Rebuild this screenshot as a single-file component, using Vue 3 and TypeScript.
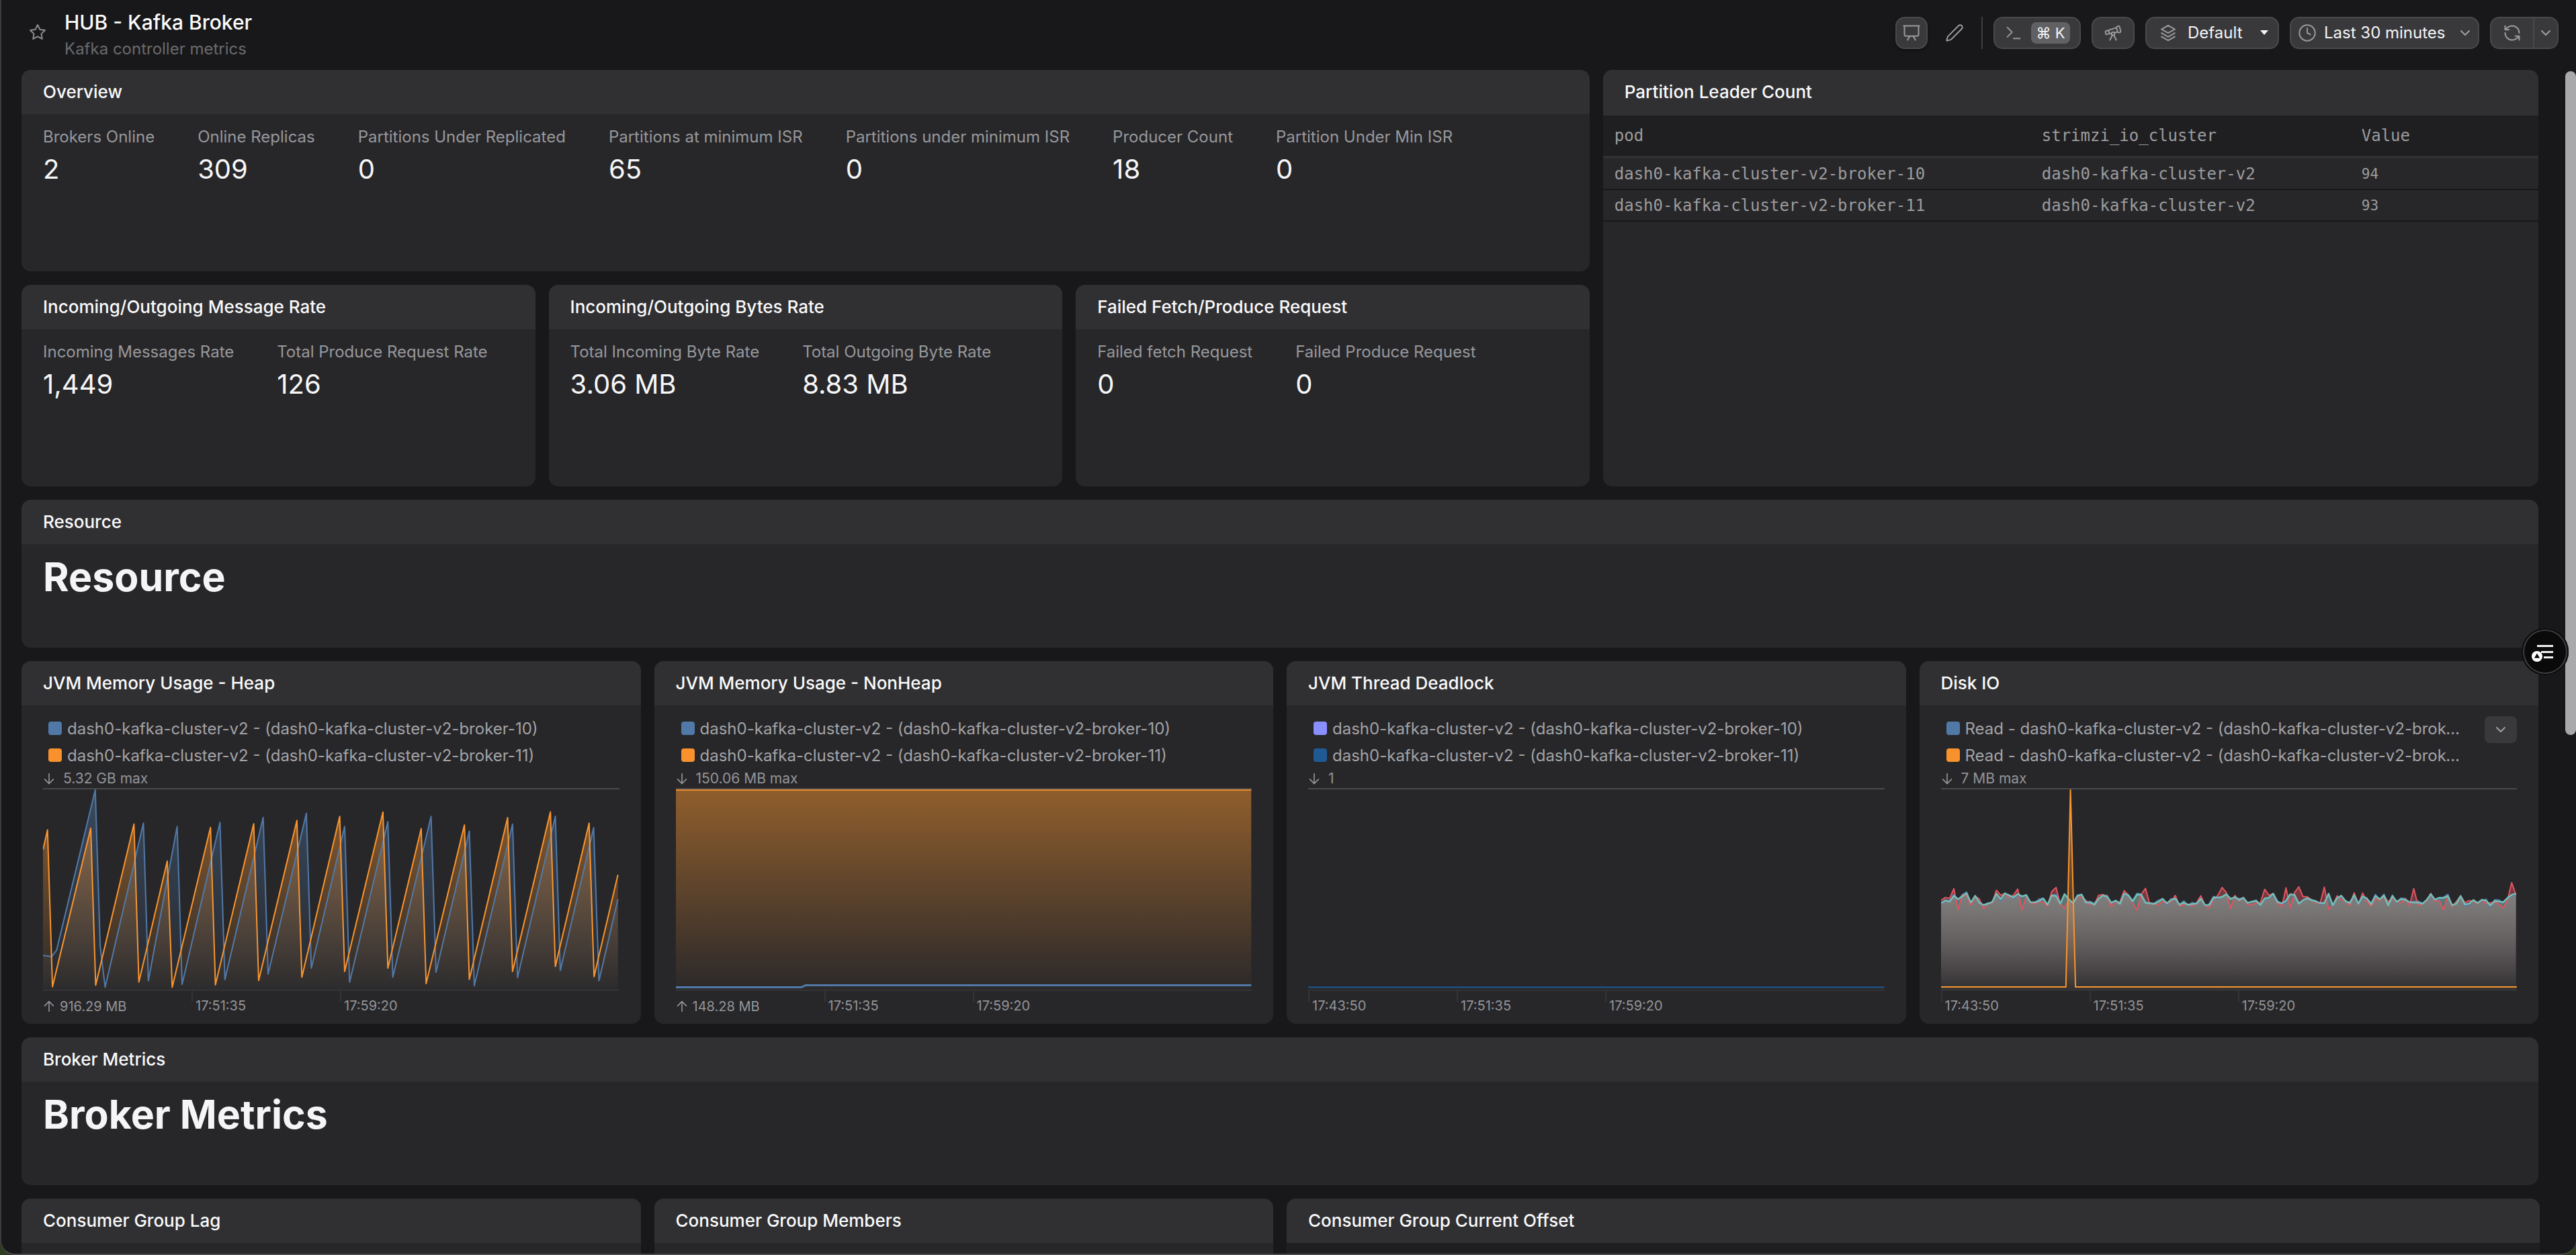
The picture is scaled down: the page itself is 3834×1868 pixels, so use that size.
<script setup lang="ts">
type Pt = [number, number]
interface Series { color: string; points: Pt[]; top: number; width?: number }
interface Panel {
  id: string
  title: string
  legend: { color: string; text: string }[]
  max: string
  min?: string
  times: string[]
  vb: [number, number, number, number]
  series: Series[]
  expand?: boolean
}

const BLUE = '#5179a8'
const ORANGE = '#f9952f'
const RED = '#e0555f'
const TEAL = '#73bfb8'

const legendFor = (a: string, b: string) => [
  { color: a, text: 'dash0-kafka-cluster-v2 - (dash0-kafka-cluster-v2-broker-10)' },
  { color: b, text: 'dash0-kafka-cluster-v2 - (dash0-kafka-cluster-v2-broker-11)' }
]

const heapOrange: Pt[] = [[105,795],[116,712],[128,1368],[221,705],[233,1362],[326,688],[338,1348],[407,843],[419,1370],[512,702],[524,1360],[617,687],[629,1342],[722,673],[734,1328],[826,656],[838,1304],[931,638],[943,1290],[1024,707],[1036,1355],[1129,692],[1141,1337],[1234,661],[1246,1304],[1338,637],[1350,1283],[1432,684],[1444,1326],[1502,900]]
const heapBlue: Pt[] = [[105,1237],[126,1242],[138,1215],[232,545],[244,1200],[256,1370],[349,684],[361,1343],[431,698],[443,1358],[535,681],[547,1338],[640,660],[652,1315],[745,643],[757,1290],[838,698],[850,1349],[943,678],[955,1328],[1048,656],[1060,1307],[1141,717],[1153,1364],[1246,688],[1258,1330],[1350,655],[1362,1300],[1443,703],[1456,1343],[1502,1002]]

let seed = 4711
function rnd(): number {
  seed = (seed * 1103515245 + 12345) % 2147483648
  return seed / 2147483648
}
const redUp = [78, 228, 320, 538, 722, 825, 870, 905, 962, 1180, 1410]
const redDown = [90, 240, 345, 515, 735, 885, 975, 1250, 1388]
const tealPts: Pt[] = []
const redPts: Pt[] = []
const bluePts: Pt[] = []
for (let x = 45; x <= 1423; x += 10.2) {
  const t = 1058 + (rnd() - 0.5) * 46
  tealPts.push([x, t])
  let r = t + (rnd() - 0.5) * 30
  if (redUp.some((v) => Math.abs(v - x) < 5.2)) r = x > 1400 ? 995 : 1010 + rnd() * 12
  if (redDown.some((v) => Math.abs(v - x) < 5.2)) r = 1090 + rnd() * 12
  redPts.push([x, r])
  bluePts.push([x, t + (rnd() - 0.5) * 14])
}

const panels: Panel[] = [
  {
    id: 'heap', title: 'JVM Memory Usage - Heap', legend: legendFor(BLUE, '#f9922c'),
    max: '5.32 GB max', min: '916.29 MB', times: ['17:51:35', '17:59:20'], vb: [105, 543, 1400, 837],
    series: [{ color: BLUE, points: heapBlue, top: 0.42 }, { color: ORANGE, points: heapOrange, top: 0.5 }]
  },
  {
    id: 'nonheap', title: 'JVM Memory Usage - NonHeap', legend: legendFor(BLUE, '#f9922c'),
    max: '150.06 MB max', min: '148.28 MB', times: ['17:51:35', '17:59:20'], vb: [75, 543, 1400, 837],
    series: [
      { color: ORANGE, points: [[75, 545], [1473, 545]], top: 0.5 },
      { color: BLUE, points: [[75, 1370], [380, 1370], [390, 1362], [1473, 1362]], top: 0, width: 3 }
    ]
  },
  {
    id: 'thread', title: 'JVM Thread Deadlock', legend: legendFor('#8a8fff', '#1f5a94'),
    max: '1', times: ['17:43:50', '17:51:35', '17:59:20'], vb: [78, 543, 1400, 837],
    series: [{ color: '#1f5a94', points: [[78, 1370], [1478, 1370]], top: 0 }]
  },
  {
    id: 'disk', title: 'Disk IO',
    legend: [
      { color: BLUE, text: 'Read - dash0-kafka-cluster-v2 - (dash0-kafka-cluster-v2-broker-10)' },
      { color: '#f9922c', text: 'Read - dash0-kafka-cluster-v2 - (dash0-kafka-cluster-v2-broker-11)' }
    ],
    max: '7 MB max', times: ['17:43:50', '17:51:35', '17:59:20'], vb: [45, 642, 1380, 758], expand: true,
    series: [
      { color: BLUE, points: bluePts, top: 0.5 },
      { color: '#cfc16a', points: tealPts, top: 0.3, width: 0 },
      { color: RED, points: redPts, top: 0.85 },
      { color: TEAL, points: tealPts, top: 0.85, width: 2.5 },
      { color: ORANGE, points: [[45, 1390], [344, 1390], [355, 642], [367, 1390], [1425, 1390]], top: 0.5 }
    ]
  }
]

function linePath(pts: Pt[]): string {
  return 'M' + pts.map((p) => `${p[0]} ${p[1]}`).join(' L')
}
function areaPath(pts: Pt[], base: number): string {
  return `${linePath(pts)} L${pts[pts.length - 1][0]} ${base} L${pts[0][0]} ${base} Z`
}
const vbStr = (p: Panel) => p.vb.join(' ')
const bottom = (p: Panel) => p.vb[1] + p.vb[3]

const overview = [
  ['Brokers Online', '2'], ['Online Replicas', '309'], ['Partitions Under Replicated', '0'],
  ['Partitions at minimum ISR', '65'], ['Partitions under minimum ISR', '0'],
  ['Producer Count', '18'], ['Partition Under Min ISR', '0']
]
const statCards = [
  { title: 'Incoming/Outgoing Message Rate', stats: [['Incoming Messages Rate', '1,449'], ['Total Produce Request Rate', '126']] },
  { title: 'Incoming/Outgoing Bytes Rate', stats: [['Total Incoming Byte Rate', '3.06 MB'], ['Total Outgoing Byte Rate', '8.83 MB']] },
  { title: 'Failed Fetch/Produce Request', stats: [['Failed fetch Request', '0'], ['Failed Produce Request', '0']] }
]
const rows = [
  ['dash0-kafka-cluster-v2-broker-10', 'dash0-kafka-cluster-v2', '94'],
  ['dash0-kafka-cluster-v2-broker-11', 'dash0-kafka-cluster-v2', '93']
]
</script>

<template>
  <div class="window">
    <header class="topbar">
      <svg class="star" viewBox="0 0 24 24" fill="none" stroke="#8e8e90" stroke-width="1.7" stroke-linejoin="round">
        <path d="M12 2.6l2.9 5.9 6.5.95-4.7 4.58 1.1 6.47L12 17.45 6.2 20.5l1.1-6.47-4.7-4.58 6.5-.95z" />
      </svg>
      <div class="titles">
        <div class="page-title">HUB - Kafka Broker</div>
        <div class="page-sub">Kafka controller metrics</div>
      </div>
      <div class="toolbar">
        <button class="btn w48 shadow">
          <svg class="ic" viewBox="0 0 24 24"><path d="M2 3h20M21 3v11a2 2 0 0 1-2 2H5a2 2 0 0 1-2-2V3M10 16l-3 5M14 16l3 5" /></svg>
        </button>
        <button class="btn w48 bare">
          <svg class="ic" viewBox="0 0 24 24"><path d="M21.174 6.812a1 1 0 0 0-3.986-3.987L3.842 16.174a2 2 0 0 0-.5.83l-1.321 4.352a.5.5 0 0 0 .623.622l4.353-1.32a2 2 0 0 0 .83-.497z" /></svg>
        </button>
        <span class="divider"></span>
        <button class="btn cmd">
          <svg class="ic" viewBox="0 0 24 24"><path d="M4 17l6-6-6-6M12 19h8" /></svg>
          <kbd class="kbd"><span>⌘</span><span>K</span></kbd>
        </button>
        <button class="btn w64">
          <svg class="ic" viewBox="0 0 24 24">
            <path d="M10.065 12.493l-6.18 1.318a.934.934 0 0 1-1.108-.702l-.537-2.15a1.07 1.07 0 0 1 .691-1.265l13.504-4.44M13.56 11.747l4.332-.924M16 21l-3.105-6.21M16.485 5.94a2 2 0 0 1 1.455-2.425l1.09-.272a1 1 0 0 1 1.212.727l1.515 6.06a1 1 0 0 1-.727 1.213l-1.09.272a2 2 0 0 1-2.425-1.455zM6.158 8.633l1.114 4.456M8 21l3.105-6.21" />
            <circle cx="12" cy="13" r="2" />
          </svg>
        </button>
        <button class="btn variant">
          <svg class="ic" viewBox="0 0 24 24"><path d="M12 2.5l8.5 4.8-8.5 4.8-8.5-4.8zM3.5 12.2l8.5 4.8 8.5-4.8M3.5 16.8l8.5 4.8 8.5-4.8" /></svg>
          <span class="btn-text">Default</span>
          <span class="caret"></span>
        </button>
        <button class="btn range">
          <svg class="ic" viewBox="0 0 24 24"><circle cx="12" cy="12" r="10" /><path d="M12 6v6l4 2" /></svg>
          <span class="btn-text">Last 30 minutes</span>
          <svg class="chev" viewBox="0 0 24 24"><path d="M6 9l6 6 6-6" /></svg>
        </button>
        <div class="btn refresh">
          <span class="ref-main">
            <svg class="ic" viewBox="0 0 24 24"><path d="M21 12a9 9 0 0 0-9-9 9.75 9.75 0 0 0-6.74 2.74L3 8M3 3v5h5M3 12a9 9 0 0 0 9 9 9.75 9.75 0 0 0 6.74-2.74L21 16M16 16h5v5" /></svg>
          </span>
          <span class="ref-more">
            <svg class="chev" viewBox="0 0 24 24"><path d="M6 9l6 6 6-6" /></svg>
          </span>
        </div>
      </div>
    </header>

    <main class="grid">
      <section class="card s15">
        <div class="card-head">Overview</div>
        <div class="stats">
          <div v-for="s in overview" :key="s[0]" class="stat">
            <div class="stat-label">{{ s[0] }}</div>
            <div class="stat-value">{{ s[1] }}</div>
          </div>
        </div>
      </section>

      <section class="card s9 tall">
        <div class="card-head head-tall">Partition Leader Count</div>
        <div class="tbl-head tbl-row">
          <span>pod</span><span>strimzi_io_cluster</span><span>Value</span>
        </div>
        <div v-for="r in rows" :key="r[0]" class="tbl-line tbl-row">
          <span>{{ r[0] }}</span><span>{{ r[1] }}</span><span class="num">{{ r[2] }}</span>
        </div>
      </section>

      <section v-for="c in statCards" :key="c.title" class="card s5">
        <div class="card-head">{{ c.title }}</div>
        <div class="stats">
          <div v-for="s in c.stats" :key="s[0]" class="stat">
            <div class="stat-label">{{ s[0] }}</div>
            <div class="stat-value">{{ s[1] }}</div>
          </div>
        </div>
      </section>

      <section class="card s24">
        <div class="card-head">Resource</div>
        <h1 class="big">Resource</h1>
      </section>

      <section v-for="p in panels" :key="p.id" class="card s6">
        <div class="card-head">{{ p.title }}</div>
        <div class="chart-body">
          <div class="legend-row">
            <div class="legend">
              <div v-for="l in p.legend" :key="l.text" class="legend-item">
                <span class="swatch" :style="{ background: l.color }"></span>
                <span class="legend-text">{{ l.text }}</span>
              </div>
            </div>
            <button v-if="p.expand" class="expand">
              <svg class="chev" viewBox="0 0 24 24"><path d="M6 9l6 6 6-6" /></svg>
            </button>
          </div>
          <div class="axis-label max">
            <svg class="arrow" viewBox="0 0 24 24"><path d="M12 4v16M5 13l7 7 7-7" /></svg>
            <span>{{ p.max }}</span>
          </div>
          <svg class="plot" :viewBox="vbStr(p)" preserveAspectRatio="none">
            <defs>
              <linearGradient v-for="(s, i) in p.series" :id="`${p.id}-${i}`" :key="i" gradientUnits="userSpaceOnUse" x1="0" x2="0" :y1="p.vb[1]" :y2="bottom(p)">
                <stop offset="0" :stop-color="s.color" :stop-opacity="s.top" />
                <stop offset="1" :stop-color="s.color" stop-opacity="0.02" />
              </linearGradient>
            </defs>
            <template v-for="(s, i) in p.series" :key="i">
              <path v-if="s.top > 0" :d="areaPath(s.points, bottom(p))" :fill="`url(#${p.id}-${i})`" stroke="none" />
            </template>
            <path v-for="(s, i) in p.series" :key="'l' + i" :d="linePath(s.points)" fill="none" :stroke="s.color" :stroke-width="s.width ?? 2" vector-effect="non-scaling-stroke" stroke-linejoin="round" />
          </svg>
          <div class="axis">
            <div v-if="p.min" class="axis-col">
              <div class="axis-label min">
                <svg class="arrow" viewBox="0 0 24 24"><path d="M12 20V4M5 11l7-7 7 7" /></svg>
                <span>{{ p.min }}</span>
              </div>
            </div>
            <div v-for="t in p.times" :key="t" class="axis-col tick">{{ t }}</div>
          </div>
        </div>
      </section>

      <section class="card s24">
        <div class="card-head">Broker Metrics</div>
        <h1 class="big">Broker Metrics</h1>
      </section>

      <section class="card s6 cut"><div class="card-head">Consumer Group Lag</div></section>
      <section class="card s6 cut"><div class="card-head">Consumer Group Members</div></section>
      <section class="card s12 cut wide"><div class="card-head">Consumer Group Current Offset</div><div class="dark-body"></div></section>
    </main>

    <div class="scroll-thumb"></div>
    <div class="floater">
      <svg viewBox="0 0 70 70" class="floater-ic">
        <rect x="23" y="25" width="24" height="3" fill="#f2f2f2" />
        <rect x="29" y="34" width="18" height="3" fill="#f2f2f2" />
        <rect x="33" y="42" width="14" height="3" fill="#f2f2f2" />
        <circle cx="23" cy="42" r="8" fill="#fff" />
        <path d="M23 37.5l4.2 7h-8.4z" fill="#0a0a0a" />
      </svg>
    </div>
  </div>
</template>

<style>
html, body { margin: 0; background: #2f3d20; overflow: hidden; }
</style>

<style scoped>
.window {
  position: relative;
  box-sizing: border-box;
  width: 3834px;
  height: 1868px;
  overflow: hidden;
  background: #18181a;
  border-left: 2px solid #3c3c3e;
  border-bottom: 2px solid #4a4a4c;
  border-radius: 0 0 22px 22px;
  font-family: Inter, "Noto Sans", sans-serif;
  color: #fafafa;
}
.topbar { display: flex; align-items: center; height: 104px; padding: 0 26px 0 40px; box-sizing: border-box; }
.star { width: 28px; height: 28px; margin-right: 26px; margin-top: -8px; }
.titles { display: flex; flex-direction: column; gap: 4px; margin-top: -2px; }
.page-title { font-size: 30px; line-height: 40px; font-weight: 450; }
.page-sub { font-size: 24px; line-height: 32px; color: #6a6a6d; }
.toolbar { margin-left: auto; display: flex; align-items: center; gap: 16px; margin-top: -7px; }
.btn {
  box-sizing: border-box;
  display: flex;
  align-items: center;
  height: 48px;
  padding: 0;
  background: #39393c;
  border: 2px solid #49494c;
  border-radius: 14px;
  color: #f5f5f5;
  font: 400 24px/1 Inter, sans-serif;
}
.w48 { width: 48px; justify-content: center; }
.w64 { width: 64px; justify-content: center; }
.shadow { box-shadow: 0 2px 4px rgba(0, 0, 0, 0.4); }
.bare { background: transparent; border-color: transparent; }
.ic { width: 28px; height: 28px; fill: none; stroke: #9a9a9c; stroke-width: 1.7; stroke-linecap: round; stroke-linejoin: round; flex: none; }
.chev { width: 24px; height: 24px; fill: none; stroke: #a4a4a6; stroke-width: 1.8; stroke-linecap: round; stroke-linejoin: round; flex: none; }
.divider { width: 2px; height: 48px; background: #3e3e40; }
.cmd { width: 130px; padding-left: 14px; }
.kbd { display: flex; align-items: center; justify-content: center; gap: 6px; width: 58px; height: 32px; margin-left: 12px; background: #616164; border-radius: 8px; font: 400 22px/1 Inter, "DejaVu Sans", sans-serif; color: #f5f5f5; }
.variant { width: 199px; padding-left: 18px; }
.variant .btn-text { margin-left: 15px; }
.caret { margin-left: 26px; width: 0; height: 0; border-left: 6px solid transparent; border-right: 6px solid transparent; border-top: 7px solid #f5f5f5; }
.range { width: 282px; padding-left: 10px; }
.range .btn-text { margin-left: 11px; }
.range .chev { margin-left: 17px; }
.refresh { width: 102px; }
.ref-main { width: 62px; height: 100%; display: flex; align-items: center; justify-content: center; border-right: 2px solid #49494c; }
.ref-more { flex: 1; display: flex; align-items: center; justify-content: center; }

.grid {
  display: grid;
  grid-template-columns: repeat(24, minmax(0, 1fr));
  grid-template-rows: 300px 300px 220px 540px 220px 300px;
  gap: 20px;
  width: 3746px;
  margin-left: 30px;
}
.card { background: #27272a; border-radius: 14px; overflow: hidden; display: flex; flex-direction: column; min-width: 0; }
.card-head { flex: none; height: 66px; line-height: 66px; padding: 0 32px; background: #303033; font-size: 26px; font-weight: 450; color: #fafafa; white-space: nowrap; }
.head-tall { height: 68px; line-height: 66px; }
.s5 { grid-column: span 5; }
.s6 { grid-column: span 6; }
.s9 { grid-column: span 9; }
.s12 { grid-column: span 12; }
.s15 { grid-column: span 15; }
.s24 { grid-column: span 24; }
.tall { grid-row: span 2; }
.wide { margin-right: -2px; }

.stats { display: flex; gap: 64px; padding: 18px 32px 0; }
.stat { white-space: nowrap; }
.stat-label { font-size: 24px; line-height: 32px; color: #98989b; }
.stat-value { font-size: 40px; line-height: 48px; margin-top: 8px; color: #f7f7f7; }

.tbl-row { display: grid; grid-template-columns: 636px 476px 1fr; padding-left: 17px; font-family: "DejaVu Sans Mono", "Liberation Mono", monospace; font-size: 24px; color: #9c9c9e; align-items: center; }
.tbl-head { height: 60px; background: #1f1f21; border-bottom: 4px solid #303033; }
.tbl-line { height: 45px; border-bottom: 2px solid #18181a; }
.num { font-size: 21px; }

.big { margin: 0; padding: 14px 32px 0; font-size: 59px; line-height: 70px; font-weight: 700; color: #f5f5f7; }

.chart-body { padding: 14px 32px 0; display: flex; flex-direction: column; }
.legend-row { display: flex; align-items: flex-start; height: 80px; }
.legend { width: 780px; padding-left: 8px; box-sizing: border-box; }
.legend-item { display: flex; align-items: center; height: 40px; gap: 8px; font-size: 24px; color: #a3a3a6; white-space: nowrap; }
.legend-text { overflow: hidden; text-overflow: ellipsis; min-width: 0; }
.swatch { flex: none; width: 20px; height: 20px; border-radius: 4px; }
.expand { margin-left: auto; margin-top: 2px; width: 48px; height: 40px; border: 0; padding: 0; border-radius: 8px; background: #39393c; display: flex; align-items: center; justify-content: center; }
.axis-label { display: flex; align-items: center; gap: 10px; font-size: 21px; color: #949497; white-space: nowrap; }
.max { height: 29px; }
.arrow { width: 22px; height: 22px; fill: none; stroke: #949497; stroke-width: 1.8; stroke-linecap: round; stroke-linejoin: round; flex: none; margin-left: -2px; }
.plot { display: block; width: 100%; height: 300px; border-top: 2px solid #4a4a4c; box-sizing: border-box; }
.axis { display: flex; border-top: 2px solid #343437; }
.axis-col { width: 221px; height: 44px; box-sizing: border-box; font-size: 20px; color: #949497; }
.tick { padding: 8px 0 0 6px; line-height: 28px; background: linear-gradient(#343437, #343437) left top / 2px 16px no-repeat; }
.min { height: 44px; padding-top: 2px; box-sizing: border-box; gap: 5px; font-size: 20px; }
.dark-body { flex: 1; background: #1f1f21; }

.scroll-thumb { position: absolute; right: 0; top: 106px; width: 16px; height: 988px; border-radius: 8px; background: #a9a9ab; }
.floater { position: absolute; left: 3751px; top: 935px; width: 70px; height: 70px; box-sizing: border-box; border-radius: 50%; background: #0a0a0a; box-shadow: inset 0 0 0 2px #0a0a0a, inset 0 0 0 4px #3e3e40; }
.floater-ic { display: block; width: 70px; height: 70px; }
</style>
